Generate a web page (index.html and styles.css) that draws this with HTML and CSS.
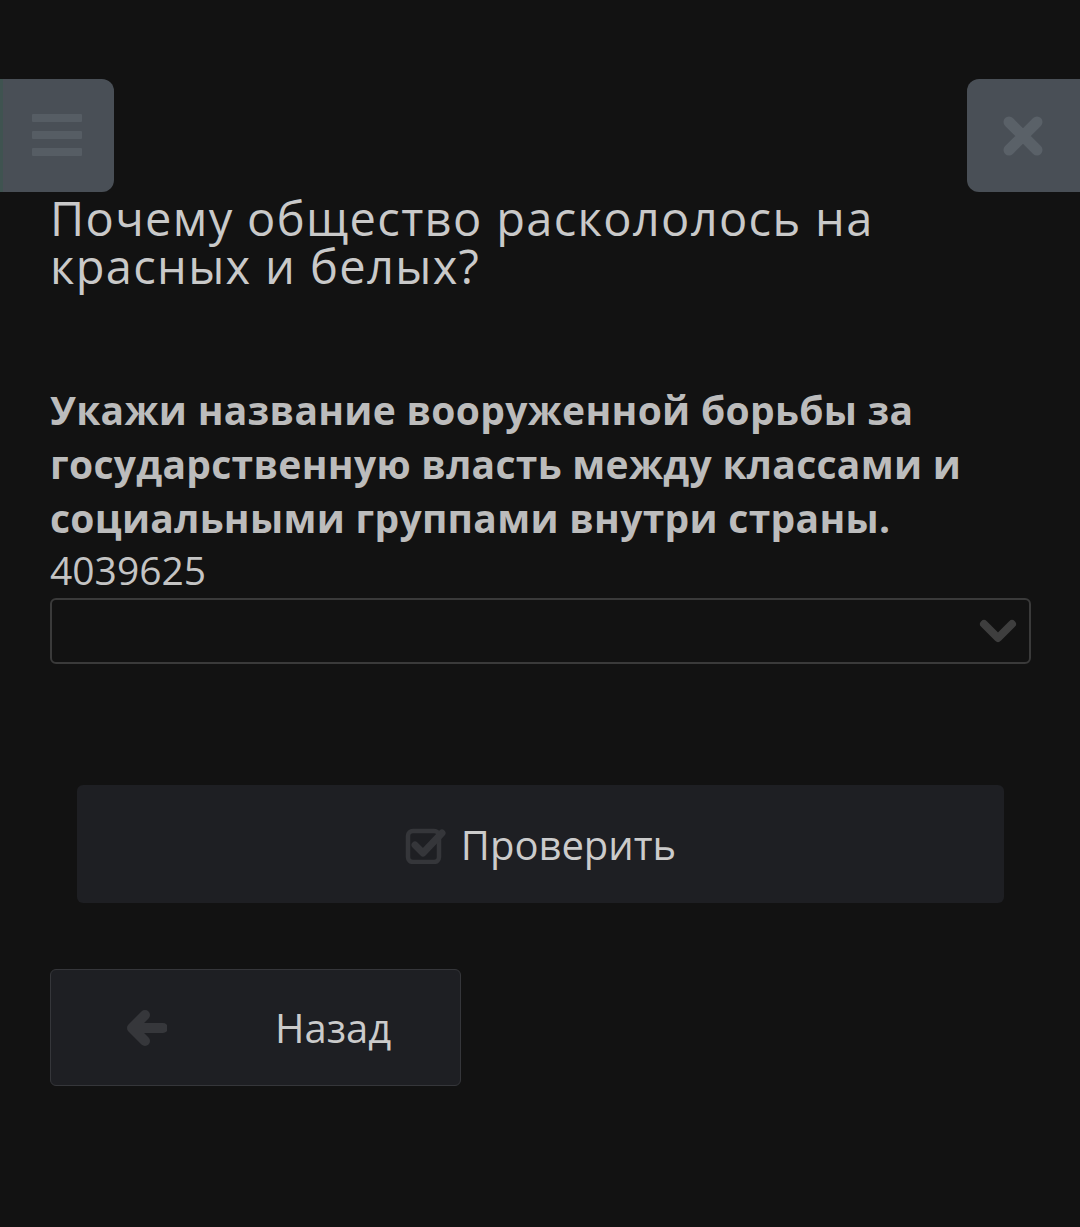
FILE: index.html
```html
<!DOCTYPE html>
<html lang="ru">
<head>
    <meta charset="UTF-8">
    <meta name="viewport" content="width=device-width, initial-scale=1.0">
    <title>Гражданская война</title>
    <link rel="stylesheet" href="styles.css">
</head>
<body>
    <div id="app">
        <div class="topbar">
            <button class="corner-button menu-button" aria-label="Меню">
                <svg width="50" height="44" viewBox="0 0 50 44">
                    <rect x="0" y="0" width="50" height="8" rx="1"/>
                    <rect x="0" y="17" width="50" height="8" rx="1"/>
                    <rect x="0" y="34" width="50" height="8" rx="1"/>
                </svg>
            </button>
            <button class="corner-button close-button" aria-label="Закрыть">
                <svg width="42" height="42" viewBox="0 0 42 42">
                    <path d="M7 7 L35 35 M35 7 L7 35" stroke-width="11" stroke-linecap="round"/>
                </svg>
            </button>
        </div>

        <div class="content">
            <h1 class="title">Почему общество раскололось на красных и белых?</h1>

            <p class="question">Укажи название вооруженной борьбы за государственную власть между классами и социальными группами внутри страны.</p>
            <div class="task-id">4039625</div>

            <div class="select">
                <svg class="chevron" width="38" height="26" viewBox="0 0 38 26">
                    <path d="M5 6 L19 20 L33 6" stroke-width="8" fill="none" stroke-linecap="round" stroke-linejoin="round"/>
                </svg>
            </div>

            <div class="check-row">
                <button class="button check-button">
                    <svg class="check-icon" width="42" height="38" viewBox="0 0 42 38">
                        <rect x="3" y="5" width="31" height="31" rx="5" fill="none" stroke-width="4.5"/>
                        <path d="M10 19 L18 27 L37 7" fill="none" stroke-width="7" stroke-linecap="round" stroke-linejoin="round"/>
                    </svg>
                    Проверить
                </button>
            </div>

            <button class="button back-button">
                <svg class="back-icon" width="40" height="36" viewBox="0 0 40 36">
                    <path d="M36 18 L6 18 M18 5 L5 18 L18 31" fill="none" stroke-width="10" stroke-linecap="round" stroke-linejoin="round"/>
                </svg>
                <span>Назад</span>
            </button>
        </div>
    </div>
</body>
</html>
```

FILE: styles.css
```css
body {
    margin: 0;
    background-color: #121212;
    color: #c8c8c8;
    font-family: 'Open Sans', 'Noto Sans', sans-serif;
}

#app {
    padding-top: 79px;
    min-height: 1148px;
}

.topbar {
    display: flex;
    justify-content: space-between;
    height: 113px;
}

.corner-button {
    width: 114px;
    height: 113px;
    background: #494f56;
    border: none;
    padding: 0;
    display: flex;
    align-items: center;
    justify-content: center;
    cursor: pointer;
}

.menu-button {
    border-radius: 0 12px 12px 0;
    box-shadow: inset 3px 0 0 #3f5350;
}

.menu-button svg {
    fill: #565d64;
    margin-right: 1px;
}

.close-button {
    width: 113px;
    border-radius: 12px 0 0 12px;
}

.close-button svg {
    stroke: #5a6168;
    margin-right: 1px;
}

.content {
    padding: 0 49px 0 50px;
}

.title {
    margin: 2px 0 0;
    font-size: 47px;
    font-weight: 400;
    line-height: 48px;
    letter-spacing: 1.35px;
    color: #c9c9c9;
}

.question {
    margin: 93px 0 0;
    font-size: 39px;
    font-weight: 700;
    line-height: 54px;
    color: #bcbcbc;
    letter-spacing: 0.3px;
}

.task-id {
    margin-top: 3px;
    font-size: 39px;
    line-height: 44px;
    color: #c4c4c4;
}

.select {
    height: 62px;
    margin-top: 6px;
    border: 2px solid #3a3a3a;
    border-radius: 6px;
    display: flex;
    align-items: center;
    justify-content: flex-end;
    padding-right: 12px;
}

.chevron {
    stroke: #3e3e3e;
}

.check-row {
    padding: 121px 27px 0;
}

.button {
    background: #1e1f23;
    color: #cbcbcb;
    font-family: inherit;
    border: none;
    border-radius: 6px;
    cursor: pointer;
    display: flex;
    align-items: center;
}

.check-button {
    width: 100%;
    height: 118px;
    justify-content: center;
    font-size: 40px;
    gap: 14px;
}

.check-icon {
    stroke: #35363a;
    margin-top: 2px;
}

.back-button {
    margin-top: 66px;
    width: 411px;
    height: 117px;
    border: 1px solid #35363a;
    font-size: 40px;
    padding: 0 0 0 76px;
}

.back-icon {
    stroke: #36373b;
}

.back-button span {
    margin-left: 108px;
}
```
